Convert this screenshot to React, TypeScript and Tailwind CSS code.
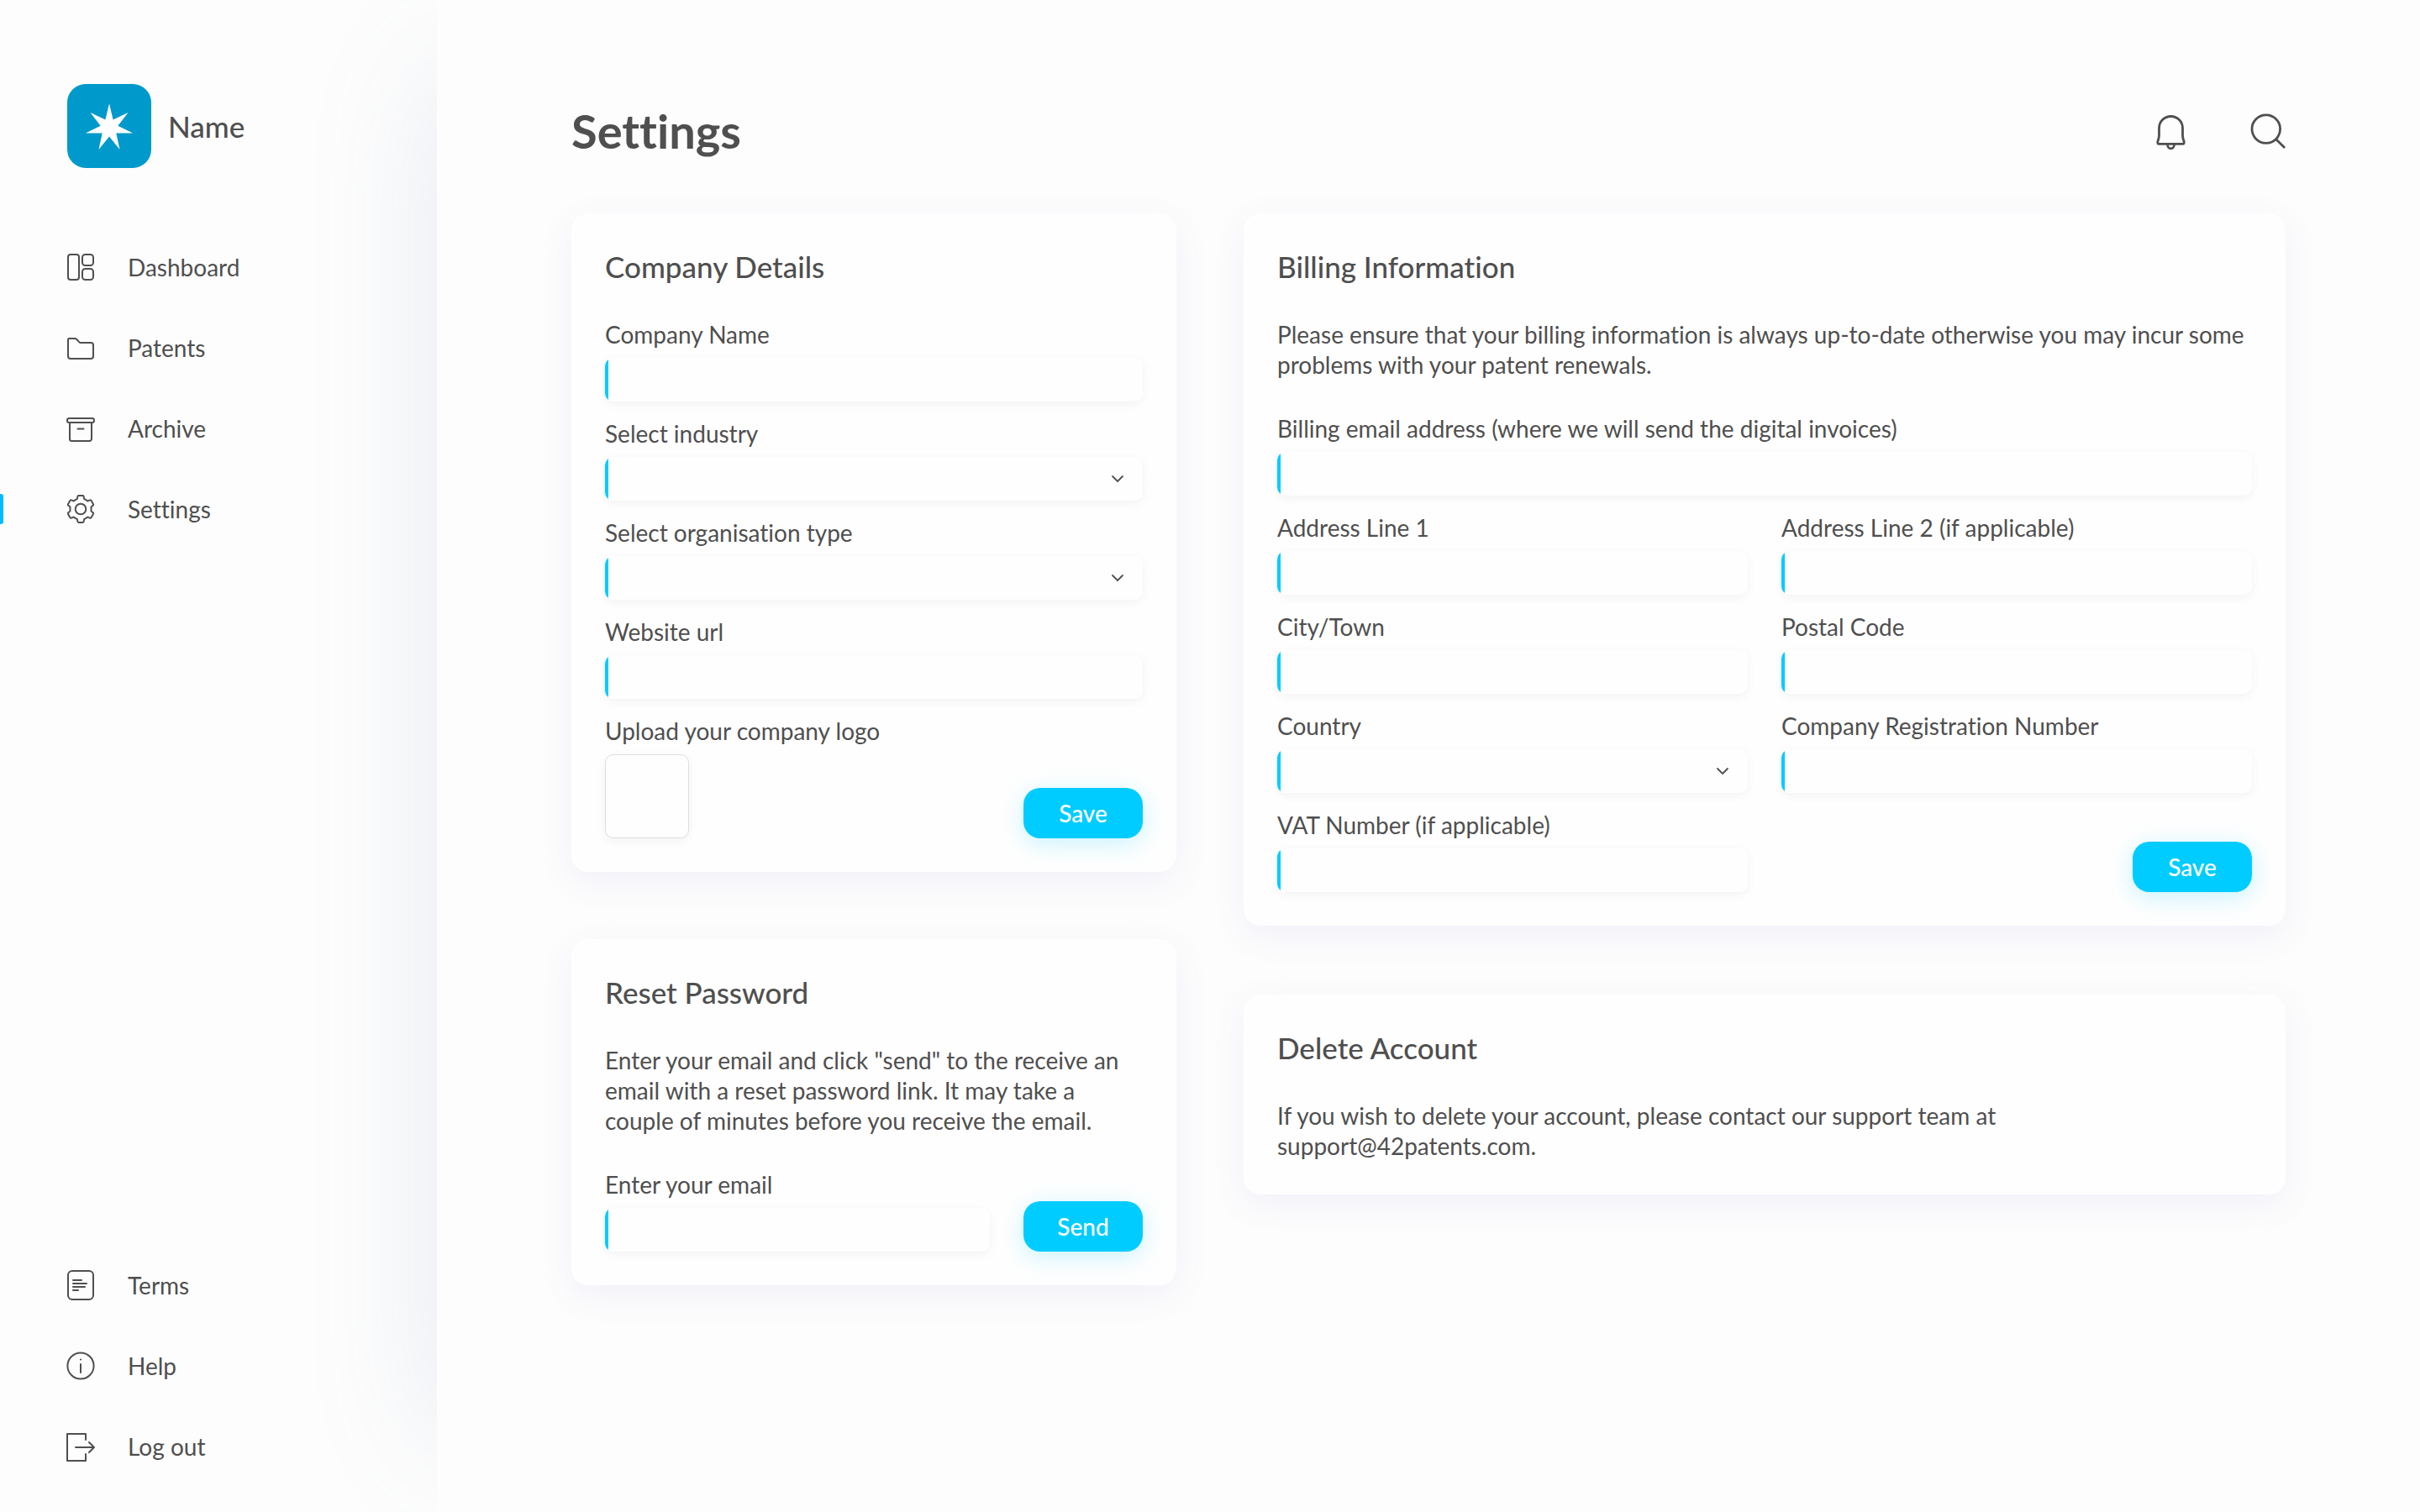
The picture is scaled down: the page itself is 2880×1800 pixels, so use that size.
import React, { useId } from "react";

type Point = [number, number];

const polar = (cx: number, cy: number, deg: number, r: number): Point => {
  const a = ((deg - 90) * Math.PI) / 180;
  return [cx + r * Math.cos(a), cy + r * Math.sin(a)];
};

const toPath = (points: Point[]) =>
  "M" + points.map(([x, y]) => `${x.toFixed(2)} ${y.toFixed(2)}`).join("L") + "Z";

const starPath = toPath(
  Array.from({ length: 14 }, (_, i) => polar(50, 52, (i * 360) / 14, i % 2 ? 10.6 : 28.8)),
);

const gearPath = (() => {
  const p = (deg: number, r: number) =>
    polar(18, 18, deg, r)
      .map((v) => v.toFixed(2))
      .join(" ");
  let d = "";
  for (let t = 0; t < 360; t += 60) {
    d += `${t ? "L" : "M"}${p(t - 14, 15.2)}Q${p(t - 13, 16.1)} ${p(t - 9, 16.1)}`;
    d += `L${p(t + 9, 16.1)}Q${p(t + 13, 16.1)} ${p(t + 14, 15.2)}`;
    d += `L${p(t + 17, 13.4)}Q${p(t + 18, 12.5)} ${p(t + 23, 12.6)}`;
    d += `L${p(t + 37, 12.6)}Q${p(t + 42, 12.5)} ${p(t + 43, 13.4)}`;
  }
  return d + "Z";
})();

function NavIcon({ children }: { children: React.ReactNode }) {
  return (
    <svg
      viewBox="0 0 36 36"
      className="size-9 shrink-0 overflow-visible"
      fill="none"
      stroke="currentColor"
      strokeWidth="2"
      strokeLinecap="round"
      strokeLinejoin="round"
      aria-hidden="true"
    >
      {children}
    </svg>
  );
}

const DashboardIcon = (
  <NavIcon>
    <rect x="3" y="3" width="13" height="30" rx="3" />
    <rect x="20" y="3" width="13" height="13" rx="3.5" />
    <rect x="20" y="20" width="13" height="13" rx="3.5" />
  </NavIcon>
);

const FolderIcon = (
  <NavIcon>
    <path d="M4 7h7.2c.8 0 1.3.2 1.8.8l3.4 3.6c.4.4.8.6 1.4.6H30a3 3 0 0 1 3 3v13a3 3 0 0 1-3 3H6a3 3 0 0 1-3-3V8a1 1 0 0 1 1-1z" />
  </NavIcon>
);

const ArchiveIcon = (
  <NavIcon>
    <rect x="2" y="6" width="32" height="5" rx="2.2" />
    <path d="M5 11v19.5A2.5 2.5 0 0 0 7.5 33h21a2.5 2.5 0 0 0 2.5-2.5V11M14.5 18.5h7" />
  </NavIcon>
);

const GearIcon = (
  <NavIcon>
    <path d={gearPath} />
    <circle cx="18" cy="18" r="6.3" />
  </NavIcon>
);

const TermsIcon = (
  <NavIcon>
    <rect x="3" y="1" width="30" height="34" rx="5" />
    <path d="M9 12h10M9 16h16M9 20h14M9 24h6" />
  </NavIcon>
);

const HelpIcon = (
  <NavIcon>
    <circle cx="18" cy="18" r="15.6" />
    <path d="M18 16v10" />
    <circle cx="18" cy="10.5" r="1.1" fill="currentColor" stroke="none" />
  </NavIcon>
);

const LogOutIcon = (
  <NavIcon>
    <path d="M24 10V3H2v32h22v-8" />
    <path d="M12 19h22M28 13l6 6-6 6" />
  </NavIcon>
);

function NavItem({ icon, label, active }: { icon: React.ReactNode; label: string; active?: boolean }) {
  return (
    <li className="relative">
      {active && <span className="absolute left-0 top-0 h-9 w-1 rounded-r-[3px] bg-[#00baff]" />}
      <a
        href="#"
        aria-current={active ? "page" : undefined}
        className="flex items-center gap-[38px] pl-[78px] text-[28px] leading-9"
      >
        {icon}
        {label}
      </a>
    </li>
  );
}

function Sidebar() {
  return (
    <aside className="flex w-[520px] shrink-0 flex-col pt-[100px] pb-[60px]">
      <a href="#" className="flex items-center gap-5 pl-20 text-[35px] font-medium leading-[46px]">
        <svg viewBox="0 0 100 100" className="size-[100px]" aria-hidden="true">
          <rect width="100" height="100" rx="22" fill="#0099cc" />
          <path d={starPath} fill="#fff" />
        </svg>
        Name
      </a>
      <nav className="mt-[100px]">
        <ul className="flex flex-col gap-[60px]">
          <NavItem icon={DashboardIcon} label="Dashboard" />
          <NavItem icon={FolderIcon} label="Patents" />
          <NavItem icon={ArchiveIcon} label="Archive" />
          <NavItem icon={GearIcon} label="Settings" active />
        </ul>
      </nav>
      <nav className="mt-auto">
        <ul className="flex flex-col gap-[60px]">
          <NavItem icon={TermsIcon} label="Terms" />
          <NavItem icon={HelpIcon} label="Help" />
          <NavItem icon={LogOutIcon} label="Log out" />
        </ul>
      </nav>
    </aside>
  );
}

function Card({ title, children }: { title: string; children: React.ReactNode }) {
  return (
    <section className="rounded-[20px] bg-[#fefefe] p-10 shadow-[0_12px_40px_rgba(98,88,188,0.08)]">
      <h2 className="mb-10 text-[35px] font-medium leading-[46px]">{title}</h2>
      {children}
    </section>
  );
}

const controlClass =
  "block h-[52px] w-full appearance-none rounded-[10px] bg-[linear-gradient(to_right,#00ccff_4px,#fefefe_4px)] px-5 text-[28px] outline-none shadow-[0_3px_12px_rgba(0,0,0,0.05)]";

function TextField({ label, type = "text", className }: { label: string; type?: string; className?: string }) {
  const id = useId();
  return (
    <div className={className}>
      <label htmlFor={id} className="mb-2.5 block leading-9">
        {label}
      </label>
      <input id={id} type={type} className={controlClass} />
    </div>
  );
}

function SelectField({ label }: { label: string }) {
  const id = useId();
  return (
    <div>
      <label htmlFor={id} className="mb-2.5 block leading-9">
        {label}
      </label>
      <div className="relative">
        <select id={id} className={controlClass} defaultValue="">
          <option value="" />
        </select>
        <svg
          viewBox="0 0 16 10"
          className="pointer-events-none absolute right-[22px] top-[21px] h-2.5 w-4"
          fill="none"
          stroke="currentColor"
          strokeWidth="1.8"
          strokeLinecap="round"
          strokeLinejoin="round"
          aria-hidden="true"
        >
          <path d="M2 2l6 6 6-6" />
        </svg>
      </div>
    </div>
  );
}

function Button({ children }: { children: React.ReactNode }) {
  return (
    <button
      type="button"
      className="h-[60px] w-[142px] shrink-0 self-end justify-self-end rounded-[20px] bg-[#00ccff] text-[28px] font-medium text-white shadow-[0_6px_28px_rgba(0,204,255,0.22)]"
    >
      {children}
    </button>
  );
}

function Header() {
  return (
    <header className="mb-[60px] flex h-[76px] items-center justify-between">
      <h1 className="text-[56px] font-bold leading-[76px]">Settings</h1>
      <div className="flex gap-[74px]">
        <button type="button" aria-label="Notifications">
          <svg
            viewBox="0 0 42 42"
            className="size-[42px] overflow-visible"
            fill="none"
            stroke="currentColor"
            strokeWidth="2.8"
            strokeLinejoin="round"
          >
            <path d="M7.5 17.5a14 14 0 0 1 28 0V26c0 3 .5 4.4 1.5 7 .6 2 .2 3.4-1.4 3.4H7.4c-1.6 0-2-1.4-1.4-3.4 1-2.6 1.5-4 1.5-7z" />
            <path d="M17.5 37c0 3 1.8 4.900 4 4.900s4-1.900 4-4.900" />
          </svg>
        </button>
        <button type="button" aria-label="Search">
          <svg
            viewBox="0 0 42 42"
            className="size-[42px] overflow-visible"
            fill="none"
            stroke="currentColor"
            strokeWidth="2.8"
          >
            <circle cx="18.8" cy="18.6" r="16.8" />
            <path d="M30.7 30.7L41 41" />
          </svg>
        </button>
      </div>
    </header>
  );
}

export default function App() {
  return (
    <div className="flex min-h-screen overflow-hidden bg-[#fdfdfd] font-['Lato',sans-serif] text-[28px] leading-9 text-[#4f4f4f] [font-variant-ligatures:none]">
      <Sidebar />
      <main className="relative min-w-0 grow bg-[#fdfdfd] px-40 pt-[118px] pb-20 shadow-[-90px_0_140px_-90px_rgba(125,145,185,0.17)]">
        <Header />
        <div className="grid grid-cols-[18fr_31fr] items-start gap-20">
          <div className="flex flex-col gap-20">
            <Card title="Company Details">
              <form className="flex flex-col gap-5">
                <TextField label="Company Name" />
                <SelectField label="Select industry" />
                <SelectField label="Select organisation type" />
                <TextField label="Website url" type="url" />
                <div className="flex justify-between">
                  <div>
                    <label htmlFor="company-logo" className="mb-2.5 block leading-9">
                      Upload your company logo
                    </label>
                    <label
                      htmlFor="company-logo"
                      aria-label="Company logo"
                      className="block size-[100px] cursor-pointer rounded-[10px] border border-[#dedede] bg-[#fefefe] shadow-[0_3px_12px_rgba(0,0,0,0.05)]"
                    >
                      <input id="company-logo" type="file" className="sr-only" />
                    </label>
                  </div>
                  <Button>Save</Button>
                </div>
              </form>
            </Card>
            <Card title="Reset Password">
              <p>
                Enter your email and click "send" to the receive an email with a reset password link. It may take a
                couple of minutes before you receive the email.
              </p>
              <form className="mt-10 flex gap-10">
                <TextField label="Enter your email" type="email" className="grow" />
                <Button>Send</Button>
              </form>
            </Card>
          </div>
          <div className="flex flex-col gap-[82px]">
            <Card title="Billing Information">
              <p>
                Please ensure that your billing information is always up-to-date otherwise you may incur some problems
                with your patent renewals.
              </p>
              <form className="mt-10 grid grid-cols-2 gap-x-10 gap-y-5">
                <TextField
                  label="Billing email address (where we will send the digital invoices)"
                  type="email"
                  className="col-span-2"
                />
                <TextField label="Address Line 1" />
                <TextField label="Address Line 2 (if applicable)" />
                <TextField label="City/Town" />
                <TextField label="Postal Code" />
                <SelectField label="Country" />
                <TextField label="Company Registration Number" />
                <TextField label="VAT Number (if applicable)" />
                <Button>Save</Button>
              </form>
            </Card>
            <Card title="Delete Account">
              <p className="max-w-[1000px]">
                If you wish to delete your account, please contact our support team at support@42patents.com.
              </p>
            </Card>
          </div>
        </div>
      </main>
    </div>
  );
}
